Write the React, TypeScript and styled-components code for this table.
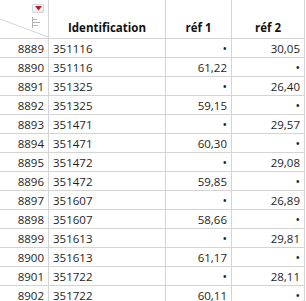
import React from 'react'
import styled, { createGlobalStyle } from 'styled-components'

const GlobalStyle = createGlobalStyle`
    html, body {
        margin:0;
        padding:0;
        background:#fff;
        overflow:hidden;
    }
    body {
        font-family:"Segoe UI", "Open Sans", "Noto Sans", sans-serif;
        color:#1e1e1e;
    }
`

type Row = { n: number; id: string; r1: string | null; r2: string | null }

const rows: Row[] = [
    { n: 8889, id: '351116', r1: null, r2: '30,05' },
    { n: 8890, id: '351116', r1: '61,22', r2: null },
    { n: 8891, id: '351325', r1: null, r2: '26,40' },
    { n: 8892, id: '351325', r1: '59,15', r2: null },
    { n: 8893, id: '351471', r1: null, r2: '29,57' },
    { n: 8894, id: '351471', r1: '60,30', r2: null },
    { n: 8895, id: '351472', r1: null, r2: '29,08' },
    { n: 8896, id: '351472', r1: '59,85', r2: null },
    { n: 8897, id: '351607', r1: null, r2: '26,89' },
    { n: 8898, id: '351607', r1: '58,66', r2: null },
    { n: 8899, id: '351613', r1: null, r2: '29,81' },
    { n: 8900, id: '351613', r1: '61,17', r2: null },
    { n: 8901, id: '351722', r1: null, r2: '28,11' },
    { n: 8902, id: '351722', r1: '60,11', r2: null },
]

const Grid = styled.div`
    display:grid;
    grid-template-columns:49px 117px 66px 73px;
    grid-auto-rows:19px;
    grid-template-rows:39px;
    width:305px;
    height:301px;
    overflow:hidden;
    font-size:11.5px;
`

const Cell = styled.div<{ $align?: 'left' | 'right' | 'center' }>`
    box-sizing:border-box;
    border-right:1px solid #d4d4d4;
    border-bottom:1px solid #d4d4d4;
    display:flex;
    align-items:center;
    justify-content:${p => p.$align === 'left' ? 'flex-start' : p.$align === 'center' ? 'center' : 'flex-end'};
    padding:0 4px 0 4px;
    line-height:15px;
    white-space:nowrap;
`

const HeadCell = styled(Cell)`
    align-items:flex-end;
    padding-bottom:3px;
    font-weight:bold;
    color:#111;
`

const Corner = styled.div`
    box-sizing:border-box;
    position:relative;
    border-right:1px solid #d4d4d4;
    border-bottom:1px solid #d4d4d4;
`

const Diagonal = styled.svg`
    position:absolute;
    left:0;
    top:0;
`

const MenuButton = styled.div`
    position:absolute;
    left:32px;
    top:4px;
    width:12px;
    height:9px;
    box-sizing:border-box;
    border:1px solid #d6d6d6;
    border-radius:1px;
    background:linear-gradient(#ffffff, #ececec);
    display:flex;
    align-items:center;
    justify-content:center;
`

const Missing = styled.span`
    font-size:12px;
`

const CornerCell: React.FC = () => (
    <Corner>
        <Diagonal width="48" height="38" viewBox="0 0 48 38">
            <line x1="0" y1="19" x2="48" y2="37" stroke="#cfd6de" strokeWidth="1" />
            <g stroke="#b4b4b4" strokeWidth="1">
                <line x1="32.5" y1="17" x2="32.5" y2="28" />
                <line x1="33" y1="19.5" x2="37" y2="19.5" />
                <line x1="33" y1="22.5" x2="40" y2="22.5" />
                <line x1="33" y1="25.5" x2="38" y2="25.5" />
            </g>
        </Diagonal>
        <MenuButton>
            <svg width="7" height="5" viewBox="0 0 7 5">
                <polygon points="0,0 7,0 3.5,4.5" fill="#c8102e" />
            </svg>
        </MenuButton>
    </Corner>
)

const Value: React.FC<{ v: string | null }> = ({ v }) => (
    <Cell $align="right">{v === null ? <Missing>•</Missing> : v}</Cell>
)

const App: React.FC = () => {
    return (
        <>
            <GlobalStyle />
            <Grid>
                <CornerCell />
                <HeadCell $align="center">Identification</HeadCell>
                <HeadCell $align="center">réf 1</HeadCell>
                <HeadCell $align="center">réf 2</HeadCell>
                {rows.map(r => (
                    <React.Fragment key={r.n}>
                        <Cell $align="right">{r.n}</Cell>
                        <Cell $align="left">{r.id}</Cell>
                        <Value v={r.r1} />
                        <Value v={r.r2} />
                    </React.Fragment>
                ))}
            </Grid>
        </>
    )
}

export default App
